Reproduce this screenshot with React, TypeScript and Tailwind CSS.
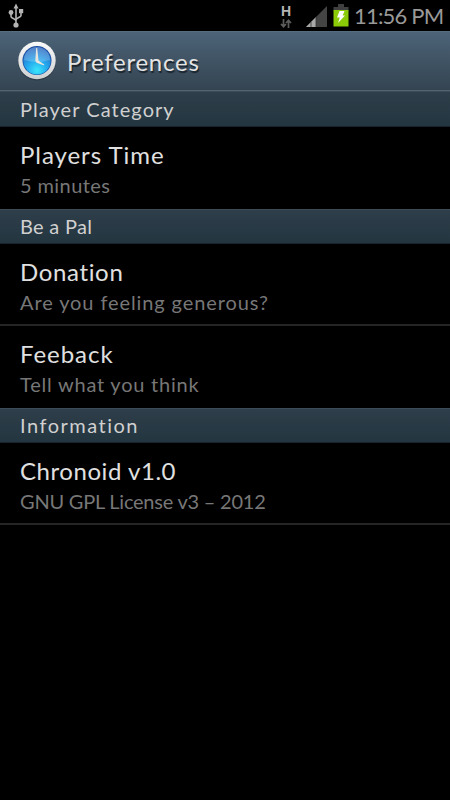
import React from 'react'

interface Preference {
  title: string
  summary: string
  titleClass: string
  summaryClass: string
}

interface PreferenceGroup {
  name: string
  nameClass: string
  items: Preference[]
}

const groups: PreferenceGroup[] = [
  {
    name: 'Player Category',
    nameClass: 'tracking-[1.05px]',
    items: [
      {
        title: 'Players Time',
        summary: '5 minutes',
        titleClass: 'tracking-[0.95px]',
        summaryClass: 'tracking-[0.4px]',
      },
    ],
  },
  {
    name: 'Be a Pal',
    nameClass: 'tracking-[0.3px]',
    items: [
      {
        title: 'Donation',
        summary: 'Are you feeling generous?',
        titleClass: 'tracking-[0.65px]',
        summaryClass: 'tracking-[0.9px]',
      },
      {
        title: 'Feeback',
        summary: 'Tell what you think',
        titleClass: 'tracking-[0.95px]',
        summaryClass: 'tracking-[0.78px]',
      },
    ],
  },
  {
    name: 'Information',
    nameClass: 'tracking-[1.5px]',
    items: [
      {
        title: 'Chronoid v1.0',
        summary: 'GNU GPL License v3 – 2012',
        titleClass: 'tracking-[0.55px]',
        summaryClass: 'tracking-[-0.23px]',
      },
    ],
  },
]

function UsbIcon() {
  return (
    <svg width="16" height="26" viewBox="0 0 16 26" fill="none" stroke="#b4b4b4" strokeWidth="1.6">
      <path d="M8 5v17M3 9v4.500c0 2 5 2 5 4.500M13 9v3.500c0 2-5 2-5 4.500" />
      <path d="M8 0.500l2.500 5h-5z" fill="#b4b4b4" stroke="none" />
      <circle cx="3" cy="9.500" r="2.400" fill="#b4b4b4" stroke="none" />
      <rect x="11" y="6" width="4.200" height="4.200" fill="#b4b4b4" stroke="none" />
      <circle cx="8" cy="22" r="2.600" fill="#b4b4b4" stroke="none" />
    </svg>
  )
}

function DataArrows() {
  return (
    <svg width="12" height="9" viewBox="0 0 12 9" fill="none" stroke="#5c5c5c" strokeWidth="1.700">
      <path d="M3.500 0v7.500M1 5l2.500 2.700L6 5M8.500 9V1.500M6 4l2.500-2.700L11 4" />
    </svg>
  )
}

function SignalIcon() {
  return (
    <svg width="21" height="21" viewBox="0 0 21 21">
      <path d="M21 0v21H0z" fill="#444" />
      <path d="M10 11v10H0z" fill="#a8a8a8" />
      <path d="M5 16v5M10 11v10" stroke="#333" strokeWidth="0.800" />
    </svg>
  )
}

function BatteryIcon() {
  return (
    <svg width="16" height="23" viewBox="0 0 16 23">
      <path d="M5 0h6v3h4.500v4h-15V3H5z" fill="#3f3f3f" />
      <rect x="0.500" y="6" width="15" height="16.500" fill="#8ccb08" />
      <path d="M6.500 7h5L9.700 11.500H12L5 19l1.800-5.500H4z" fill="#fff" />
    </svg>
  )
}

function ClockIcon() {
  return (
    <svg width="40" height="40" viewBox="0 0 40 40">
      <defs>
        <linearGradient id="rim" x1="0" y1="0" x2="0" y2="1">
          <stop offset="0" stopColor="#fafafa" />
          <stop offset="1" stopColor="#cfd0d2" />
        </linearGradient>
        <radialGradient id="face" cx="0.500" cy="0.850" r="0.850">
          <stop offset="0" stopColor="#3be6fb" />
          <stop offset="0.450" stopColor="#24a8ee" />
          <stop offset="1" stopColor="#2a62bd" />
        </radialGradient>
      </defs>
      <circle cx="20" cy="20.500" r="19" fill="#222c38" opacity="0.500" />
      <circle cx="20" cy="19.500" r="18.700" fill="url(#rim)" />
      <circle cx="20" cy="19.500" r="14.500" fill="#174c9f" />
      <circle cx="20" cy="19.800" r="13.700" fill="url(#face)" />
      <path d="M7 19a13 13 0 0 1 26 0q-13 4-26 0z" fill="#fff" opacity="0.200" />
      <path d="M19.200 7h1l1.300 12.500 6 4.200-1 .6-7-2.600-1.200-2z" fill="#e8e4de" />
    </svg>
  )
}

function StatusBar() {
  return (
    <div className="flex h-[31px] items-start bg-black pl-2 text-[#999]">
      <div className="pt-[3px]">
        <UsbIcon />
      </div>
      <div className="mr-[14px] ml-auto flex w-3 flex-col items-center pt-[5px]">
        <span className="h-[14px] font-['Liberation_Sans'] text-[14px] leading-[13px] font-bold text-[#b5b5b5]">H</span>
        <DataArrows />
      </div>
      <div className="pt-[6px]">
        <SignalIcon />
      </div>
      <div className="ml-[6px] pt-1">
        <BatteryIcon />
      </div>
      <span className="ml-[5px] w-[96px] pt-[3px] text-[22px] leading-[25px] tracking-[-0.8px] whitespace-nowrap">11:56 PM</span>
    </div>
  )
}

function GroupHeader({ name, nameClass, first }: { name: string; nameClass: string; first: boolean }) {
  return (
    <div
      className={`flex border-t border-b border-t-[#3d4c57] border-b-[#17242d] bg-linear-to-b from-[#2e3e4a] to-[#233640] pl-5 text-[20px] whitespace-nowrap text-[#d0d0d0] ${
        first ? 'h-9 leading-[34px]' : 'h-[35px] leading-8'
      }`}
    >
      <span className={nameClass}>{name}</span>
    </div>
  )
}

function PreferenceRow({ item, divided }: { item: Preference; divided: boolean }) {
  return (
    <div className={`flex h-[82px] flex-col pt-3 pl-5 whitespace-nowrap ${divided ? 'border-b-2 border-[#252525]' : ''}`}>
      <span className={`text-[24px] leading-8 text-[#e0e0e0] ${item.titleClass}`}>{item.title}</span>
      <span className={`text-[20px] leading-7 text-[#777] ${item.summaryClass}`}>{item.summary}</span>
    </div>
  )
}

export default function App() {
  return (
    <div className="h-[800px] w-[450px] overflow-hidden bg-black font-['Lato',sans-serif]">
      <StatusBar />
      <header className="flex h-[60px] items-center border-t border-b border-t-[#566d80] border-b-[#526372] bg-linear-to-b from-[#4c6378] to-[#344451] pl-[17px] text-[#e4e4e4]">
        <ClockIcon />
        <h1 className="ml-[10px] pt-[2px] text-[24px] tracking-[0.75px] whitespace-nowrap [text-shadow:1px_2px_1px_#17212a]">Preferences</h1>
      </header>
      {groups.map((group, groupIndex) => (
        <section key={group.name}>
          <GroupHeader name={group.name} nameClass={group.nameClass} first={groupIndex === 0} />
          {group.items.map((item, index) => (
            <PreferenceRow
              key={item.title}
              item={item}
              divided={index < group.items.length - 1 || groupIndex === groups.length - 1}
            />
          ))}
        </section>
      ))}
    </div>
  )
}
